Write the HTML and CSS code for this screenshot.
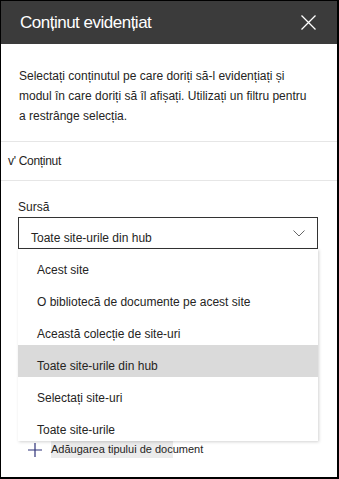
FILE: index.html
```html
<!DOCTYPE html>
<html lang="ro">
<head>
    <meta charset="UTF-8">
    <meta name="viewport" content="width=device-width, initial-scale=1.0">
    <title>Conținut evidențiat</title>
    <link rel="stylesheet" href="styles.css">
</head>
<body>
    <div class="panel">
        <div class="panel-header">
            <h1 class="panel-title">Conținut evidențiat</h1>
            <button class="close-btn" aria-label="Închidere">
                <svg width="15" height="15" viewBox="0 0 15 15">
                    <path d="M0.5 0.5 L14.5 14.5 M14.5 0.5 L0.5 14.5" stroke="#fff" stroke-width="1.3" fill="none"/>
                </svg>
            </button>
        </div>

        <p class="intro">Selectați conținutul pe care doriți să-l evidențiați și<br>modul în care doriți să îl afișați. Utilizați un filtru pentru<br>a restrânge selecția.</p>

        <div class="section-toggle">v' Conținut</div>

        <div class="field">
            <label class="field-label">Sursă</label>
            <div class="select-box">
                <span class="select-value">Toate site-urile din hub</span>
                <svg class="chevron" width="12" height="7" viewBox="0 0 12 7">
                    <path d="M0.5 0.5 L6 6 L11.5 0.5" stroke="#666" stroke-width="1" fill="none"/>
                </svg>
            </div>
        </div>

        <div class="add-row">
            <svg class="plus" width="14" height="14" viewBox="0 0 14 14">
                <path d="M7 0 V14 M0 7 H14" stroke="#2f3379" stroke-width="1.2" fill="none"/>
            </svg>
            <span class="add-label">Adăugarea tipului de document</span>
        </div>

        <!-- deschis peste formular -->
        <ul class="select-menu">
            <li>Acest site</li>
            <li>O bibliotecă de documente pe acest site</li>
            <li>Această colecție de site-uri</li>
            <li class="selected">Toate site-urile din hub</li>
            <li>Selectați site-uri</li>
            <li>Toate site-urile</li>
        </ul>
    </div>
</body>
</html>
```

FILE: styles.css
```css
body {
    margin: 0;
    padding: 0;
    font-family: 'Liberation Sans', Arial, sans-serif;
    color: #252423;
    background-color: #fff;
}

.panel {
    position: relative;
    box-sizing: border-box;
    width: 339px;
    height: 479px;
    border-top: 1px solid #000;
    border-left: 1px solid #000;
    border-right: 2px solid #000;
    border-bottom: 2px solid #000;
    overflow: hidden;
}

.panel-header {
    display: flex;
    align-items: center;
    justify-content: space-between;
    height: 43px;
    padding: 0 21px 0 19px;
    background-color: #3b3b3b;
}

.panel-title {
    margin: 0;
    font-size: 17px;
    font-weight: normal;
    color: #fff;
    letter-spacing: -0.5px;
}

.close-btn {
    display: flex;
    padding: 0;
    background: none;
    border: none;
    cursor: pointer;
}

.intro {
    margin: 22px 0 15px;
    padding: 0 10px 0 18px;
    font-size: 12px;
    line-height: 20px;
}

.section-toggle {
    height: 38px;
    line-height: 38px;
    padding-left: 7px;
    font-size: 12px;
    letter-spacing: -0.3px;
    border-top: 1px solid #e6e6e6;
    border-bottom: 1px solid #e6e6e6;
}

.field {
    padding: 16px 0 0 17px;
}

.field-label {
    display: block;
    font-size: 12px;
    line-height: 20px;
}

.select-box {
    display: flex;
    align-items: center;
    justify-content: space-between;
    box-sizing: border-box;
    width: 300px;
    height: 32px;
    padding: 0 12px 0 12px;
    border: 1px solid #333;
}

.select-value {
    padding-top: 9px;
    font-size: 12px;
    line-height: 20px;
}

.chevron {
    display: block;
}

.add-row {
    display: flex;
    align-items: center;
    margin: 192px 0 0 27px;
}

.plus {
    display: block;
    margin-right: 9px;
}

.add-label {
    font-size: 11px;
    line-height: 17px;
    background: linear-gradient(to right, #ebebeb 122px, transparent 122px);
}

.select-menu {
    position: absolute;
    top: 248px;
    left: 17px;
    width: 300px;
    margin: 0;
    padding: 0;
    list-style: none;
    background-color: #fff;
    box-shadow: 1px 1px 3px rgba(0, 0, 0, 0.18);
}

.select-menu li {
    box-sizing: border-box;
    height: 32px;
    padding: 11px 0 0 19px;
    font-size: 12px;
    line-height: 20px;
}

.select-menu li.selected {
    background-color: #dadada;
}
```
